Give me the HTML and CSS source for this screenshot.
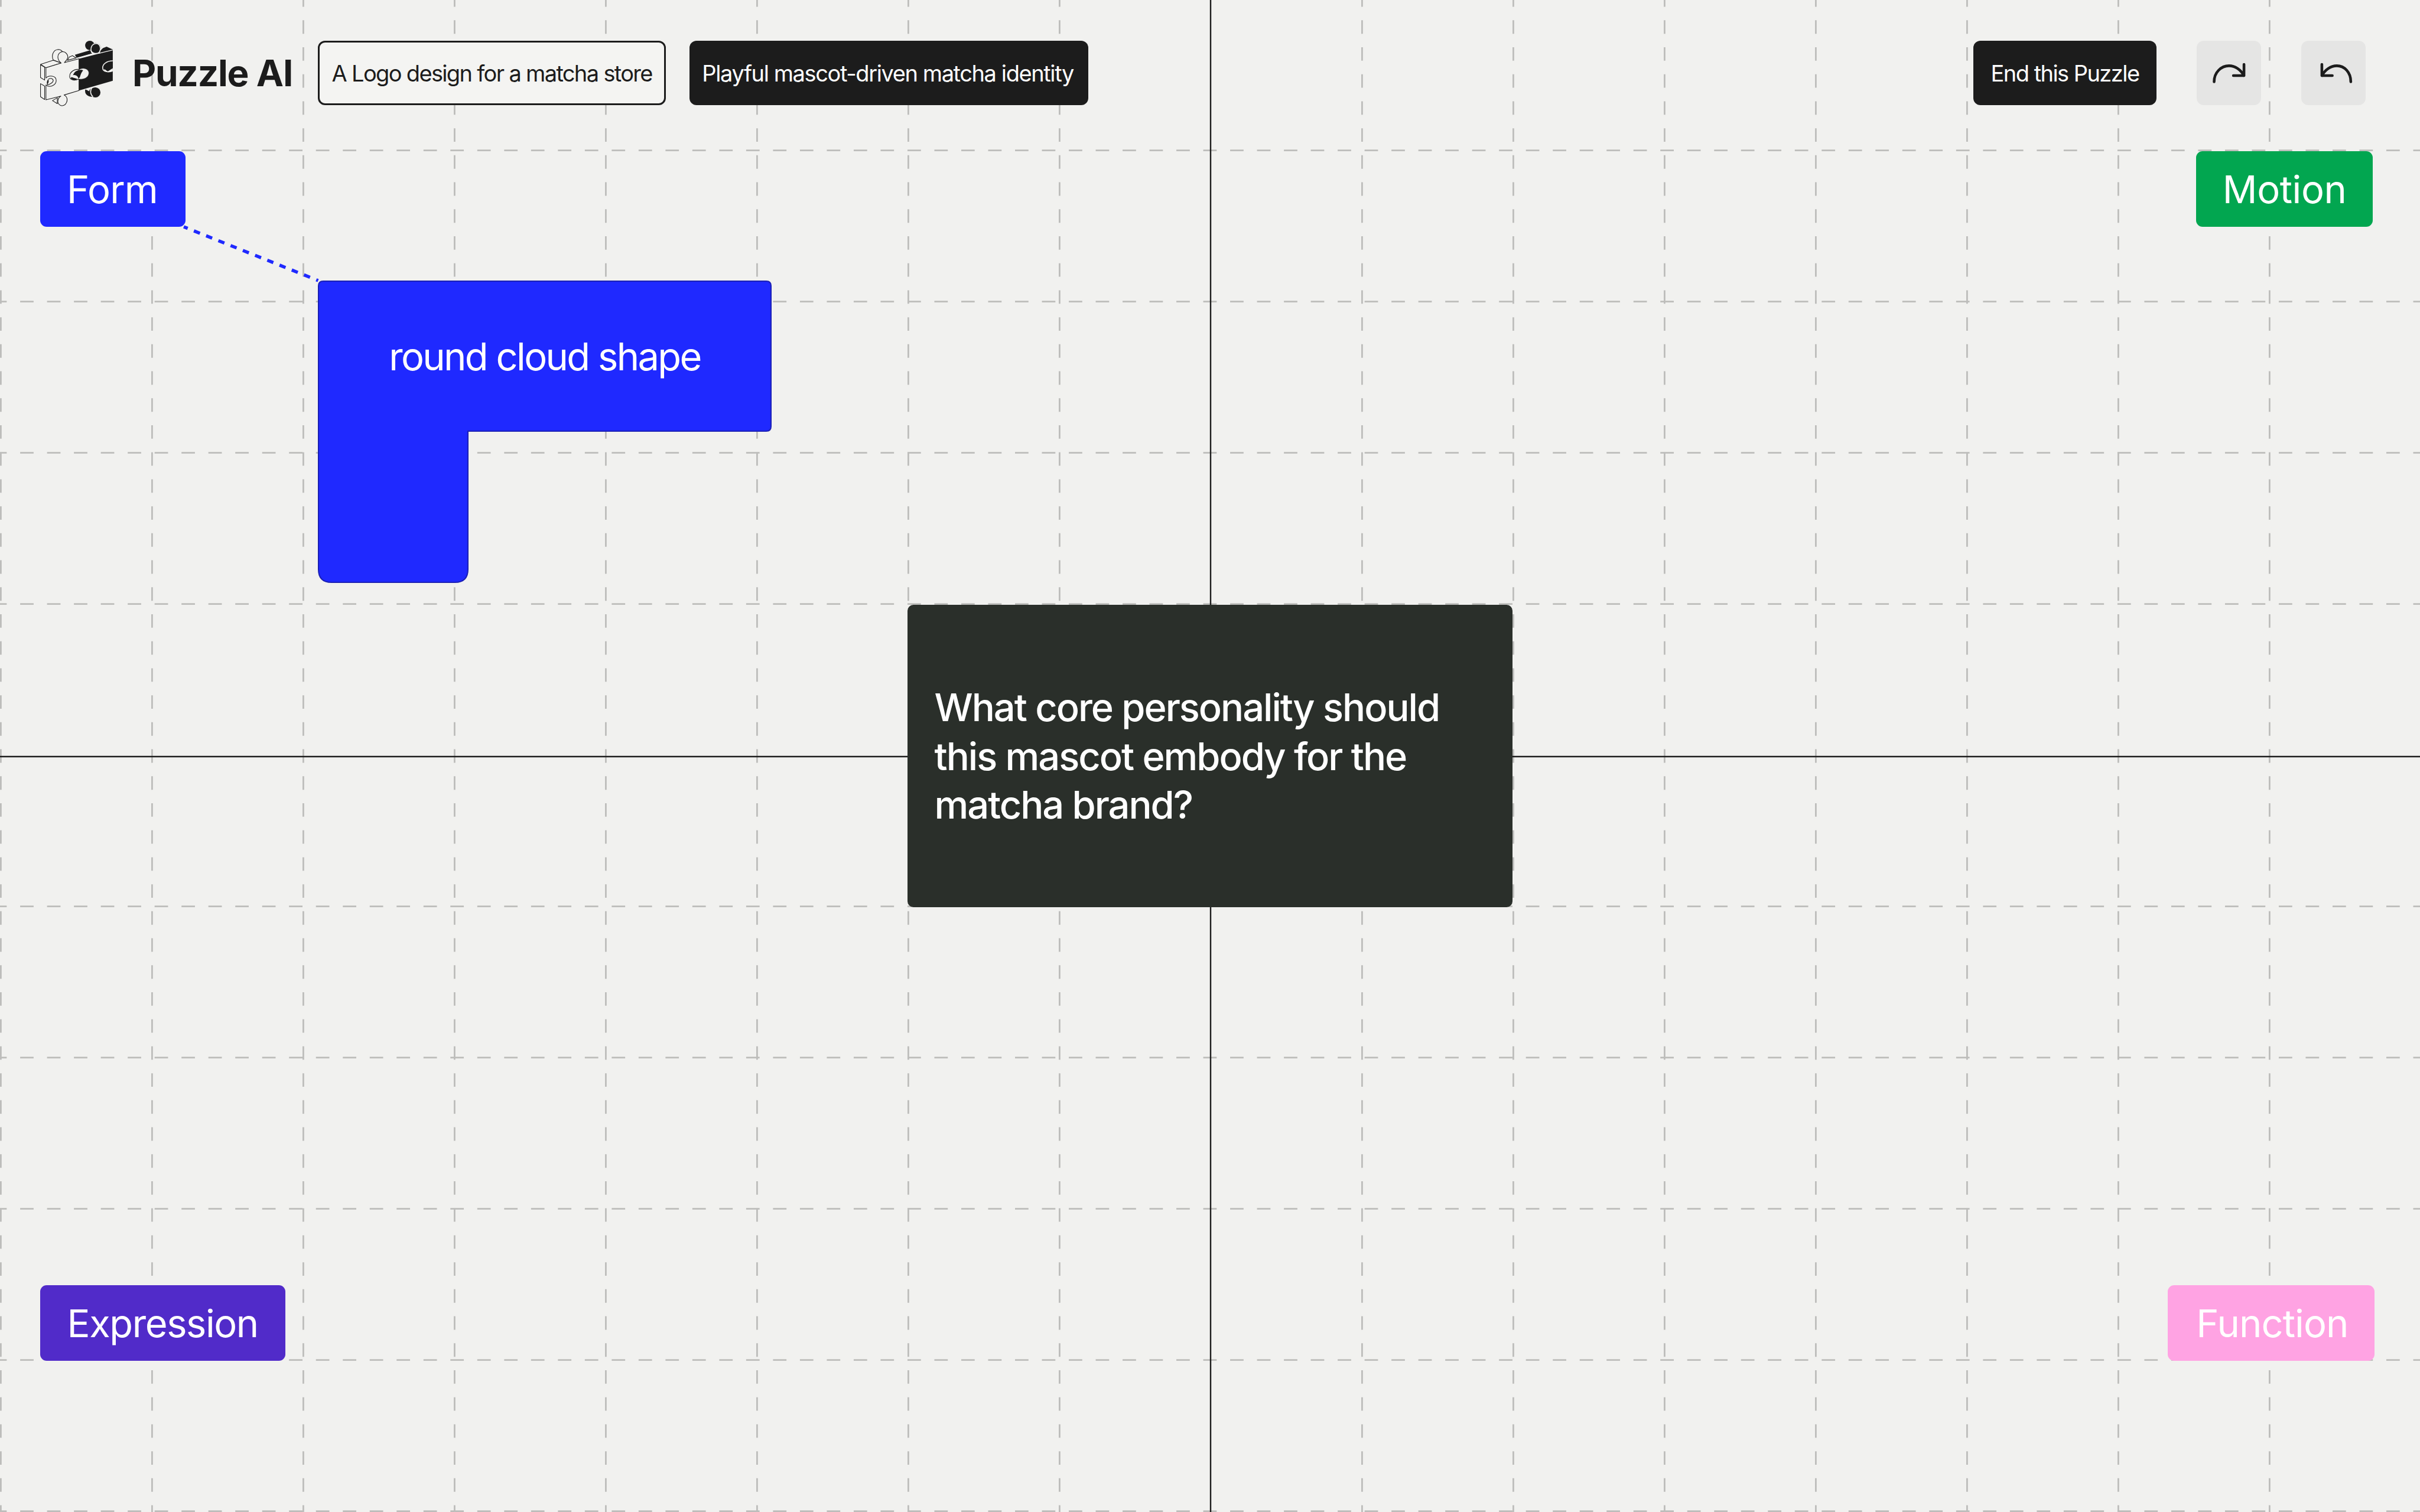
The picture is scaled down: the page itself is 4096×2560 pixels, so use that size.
FILE: index.html
```html
<!DOCTYPE html>
<html lang="en">
<head>
<meta charset="utf-8">
<title>Puzzle AI</title>
<link rel="stylesheet" href="styles.css">
</head>
<body>
<main class="board">
  <svg class="grid" width="4096" height="2560" viewBox="0 0 4096 2560" aria-hidden="true">
    <g class="grid-v">
      <line x1="1.4" y1="0" x2="1.4" y2="2560"/><line x1="257.4" y1="0" x2="257.4" y2="2560"/><line x1="513.4" y1="0" x2="513.4" y2="2560"/><line x1="769.4" y1="0" x2="769.4" y2="2560"/>
      <line x1="1025.4" y1="0" x2="1025.4" y2="2560"/><line x1="1281.4" y1="0" x2="1281.4" y2="2560"/><line x1="1537.4" y1="0" x2="1537.4" y2="2560"/><line x1="1793.4" y1="0" x2="1793.4" y2="2560"/>
      <line x1="2305.4" y1="0" x2="2305.4" y2="2560"/><line x1="2561.4" y1="0" x2="2561.4" y2="2560"/><line x1="2817.4" y1="0" x2="2817.4" y2="2560"/><line x1="3073.4" y1="0" x2="3073.4" y2="2560"/>
      <line x1="3329.4" y1="0" x2="3329.4" y2="2560"/><line x1="3585.4" y1="0" x2="3585.4" y2="2560"/><line x1="3841.4" y1="0" x2="3841.4" y2="2560"/>
    </g>
    <g class="grid-h">
      <line x1="0" y1="254.6" x2="4096" y2="254.6"/><line x1="0" y1="510.6" x2="4096" y2="510.6"/><line x1="0" y1="766.6" x2="4096" y2="766.6"/><line x1="0" y1="1022.6" x2="4096" y2="1022.6"/>
      <line x1="0" y1="1534.6" x2="4096" y2="1534.6"/><line x1="0" y1="1790.6" x2="4096" y2="1790.6"/><line x1="0" y1="2046.6" x2="4096" y2="2046.6"/><line x1="0" y1="2302.6" x2="4096" y2="2302.6"/><line x1="0" y1="2558.6" x2="4096" y2="2558.6"/>
    </g>
    <g class="axes">
      <line x1="2049" y1="0" x2="2049" y2="2560"/>
      <line x1="0" y1="1281" x2="4096" y2="1281"/>
    </g>
    <line class="link" x1="311" y1="384" x2="538.5" y2="475"/>
  </svg>

  <header class="topbar">
    <div class="brand">
      <svg class="logo" viewBox="0 0 444 390" aria-hidden="true">
        <circle class="ink" cx="288" cy="50" r="25"/>
        <path class="ink" d="M208 100 L290 76 L300 94 L218 118 Z"/>
        <path class="ink" d="M345 78 L358 65 L378 57 L411 72 V80 L340 94 Z"/>
        <path class="ink" d="M285 296 C285 285 300 276 320 276 L330 320 C305 332 265 325 263 298 L263 285 Z"/>
        <circle class="ink" cx="318" cy="302" r="27"/>
        <path class="rim" d="M262 285 L300 277 C288 292 290 312 305 325"/>
        <path class="ink" d="M230 122 L411 75 V240 L230 292 Z"/>
        <circle class="ink" cx="320" cy="64" r="27"/>
        <path class="rim" d="M299 90 C288 66 298 42 320 40 C342 38 354 68 335 93"/>
        <path class="rim rim-thin" d="M216 119 L299 96 M335 93 L411 75"/>

        <path class="notch" d="M411 133 C380 133 355 150 357 172 C358 190 385 197 411 187"/>
        <path class="paper-fill" d="M365 176 L384 190 L411 172 V187 C390 197 365 195 365 176 Z"/>

        <path class="line" d="M92 128 C82 105 90 75 118 72 C130 72 140 80 145 88 L135 145 Z"/>
        <path class="line" d="M168 130 L178 112 L195 105 L215 118 Z"/>
        <path class="line" d="M24 152 L92 130 L135 145 L53 170 Z"/>
        <path class="line" d="M24 154 L46 167 V236 L24 222 Z"/>
        <path class="line" d="M24 255 L46 268 V340 L24 325 Z"/>
        <path class="line" d="M88 346 L114 331 V362 Z"/>
        <path class="line" d="M53 170 L135 145 C110 125 112 95 135 85 C160 78 175 105 168 120 C165 130 155 138 152 142 L230 122 V292 L150 316 C170 325 172 350 155 368 C135 382 112 365 118 342 C120 332 128 325 133 322 L53 342 V262 C75 280 108 262 108 238 C108 212 70 208 53 225 Z"/>
        <path class="line-light" d="M58 262 C70 262 90 250 92 240 C92 228 78 222 65 232"/>
        <path class="ink" d="M60 262 C68 250 70 240 65 232 C58 240 56 252 60 262 Z"/>

        <g transform="translate(138 138)">
          <path class="lobe-left" d="M92 42 C70 35 42 55 42 78 C42 95 62 105 92 92 Z"/>
          <path class="lobe-right" d="M92 42 C110 28 145 35 145 60 C145 85 115 98 88 92 Z"/>
          <path class="ink" d="M60 72 C66 55 80 46 92 45 C102 42 110 44 114 46 C104 56 100 72 96 84 L90 88 C84 76 74 68 60 72 Z"/>
          <path class="ink" d="M47 88 C55 100 75 100 84 92 C72 88 60 86 52 82 Z"/>
        </g>
      </svg>
      <span class="wordmark">Puzzle AI</span>
    </div>
    <div class="tag tag-outline">A Logo design for a matcha store</div>
    <div class="tag tag-solid tag-direction">Playful mascot-driven matcha identity</div>
    <button class="tag tag-solid end-btn" type="button">End this Puzzle</button>
    <button class="icon-btn redo" type="button" aria-label="Redo">
      <svg viewBox="0 0 344 345" aria-hidden="true">
        <path d="M93 220 C93 170 130 134 173 134 C 205 134 235 155 253 187 M253 127 V187 H196"/>
      </svg>
    </button>
    <button class="icon-btn undo" type="button" aria-label="Undo">
      <svg viewBox="0 0 344 345" aria-hidden="true">
        <path d="M265 220 C265 170 232 134 190 134 C 158 134 128 155 110 187 M110 127 V187 H166"/>
      </svg>
    </button>
  </header>

  <div class="chip chip-form">Form</div>
  <div class="chip chip-motion">Motion</div>
  <div class="chip chip-expression">Expression</div>
  <div class="chip chip-function">Function</div>

  <div class="piece">
    <svg class="piece-shape" width="768" height="512" viewBox="-1 -1 768 512" aria-hidden="true">
      <path d="M8 0 H758 Q766 0 766 8 V246 Q766 254 758 254 H253 V488 Q253 510 231 510 H22 Q0 510 0 488 V8 Q0 0 8 0 Z"/>
    </svg>
    <div class="piece-label">round cloud shape</div>
  </div>

  <section class="prompt">
    <p>What core personality should this mascot embody for the matcha brand?</p>
  </section>
</main>
</body>
</html>
```

FILE: styles.css
```css
* { box-sizing: border-box; }
html, body { margin: 0; padding: 0; }
body {
  width: 4096px;
  height: 2560px;
  overflow: hidden;
  background: #f1f1ef;
  font-family: Inter, "Liberation Sans", sans-serif;
  color: #1c1c1c;
}
.board { position: relative; width: 4096px; height: 2560px; }

.grid { position: absolute; inset: 0; display: block; }
.grid-v line { stroke: #bdbdbb; stroke-width: 2.8; stroke-dasharray: 22.857 22.857; stroke-dashoffset: 11.43; }
.grid-h line { stroke: #bdbdbb; stroke-width: 2.8; stroke-dasharray: 22.755 22.755; stroke-dashoffset: 11.38; }
.axes line { stroke: #1c1c1c; stroke-width: 2.4; }
.link { stroke: #1f29ff; stroke-width: 5.5; stroke-dasharray: 11 11.3; stroke-dashoffset: 3.8; }

.topbar {
  position: relative;
  display: flex;
  align-items: center;
  height: 109px;
  padding-left: 60.7px;
  padding-right: 92px;
  top: 69px;
}
.brand { display: flex; align-items: center; gap: 23px; width: 477.8px; height: 100%; }
.logo { width: 140.3px; height: 123.3px; flex: none; display: block; margin-bottom: 2.3px; }
.logo .ink { fill: #1c1c1c; }
.logo .rim { fill: none; stroke: #f1f1ef; stroke-width: 5; }
.logo .rim-thin { stroke-width: 4; }
.logo .notch { fill: #1c1c1c; stroke: #f1f1ef; stroke-width: 5; }
.logo .paper-fill { fill: #f1f1ef; }
.logo .line { fill: #f1f1ef; stroke: #1c1c1c; stroke-width: 3.4; stroke-linejoin: round; }
.logo .line-light { fill: none; stroke: #1c1c1c; stroke-width: 3.4; }
.logo .lobe-left { fill: #f1f1ef; stroke: #1c1c1c; stroke-width: 3.4; }
.logo .lobe-right { fill: #f1f1ef; stroke: #1c1c1c; stroke-width: 2; }
.wordmark { font-size: 62px; font-weight: 700; letter-spacing: -1.2px; white-space: nowrap; }

.tag {
  display: flex;
  align-items: center;
  justify-content: center;
  height: 109px;
  padding: 0 23px;
  border-radius: 12px;
  font-family: inherit;
  font-size: 38px;
  font-weight: 400;
  letter-spacing: -1.66px;
  white-space: nowrap;
}
.tag-outline { background: #f4f4f2; border: 3px solid #1c1c1c; padding: 0 20px; }
.tag-solid { background: #1c1c1c; color: #fff; border: 0; margin-left: 40.5px; }
.tag-direction { padding: 0 25px 0 21px; letter-spacing: -1.4px; }
.end-btn { margin-left: auto; padding: 0 29.5px; letter-spacing: -1.55px; }

.icon-btn {
  width: 109px;
  height: 109px;
  padding: 0;
  border: 0;
  border-radius: 12px;
  background: #e5e5e4;
  flex: none;
  margin-left: 68px;
}
.icon-btn svg { width: 100%; height: 100%; display: block; }
.icon-btn path { fill: none; stroke: #1c1c1c; stroke-width: 14.5; stroke-linecap: round; stroke-linejoin: round; }

.chip {
  position: absolute;
  display: flex;
  align-items: center;
  height: 128px;
  border-radius: 11px;
  color: #fff;
  font-size: 65px;
  white-space: nowrap;
}
.chip-form { left: 68px; top: 256px; padding: 0 46.5px 0 45px; background: #1f29ff; letter-spacing: -0.8px; }
.chip-motion { right: 80px; top: 256px; padding: 0 44.5px 0 45px; background: #02a650; letter-spacing: -0.4px; }
.chip-expression { left: 68px; top: 2176px; padding: 0 46.5px 0 45.5px; background: #512bc9; letter-spacing: -1.4px; }
.chip-function { right: 77px; top: 2176px; padding: 0 44.5px 0 48px; background: #ffa3e3; letter-spacing: -0.9px; }

.piece { position: absolute; left: 539px; top: 476px; width: 766px; height: 510px; }
.piece-shape { position: absolute; left: -1px; top: -1px; display: block; }
.piece-shape path { fill: #1f29ff; stroke: #1a1fb5; stroke-width: 2; }
.piece-label {
  position: relative;
  display: flex;
  align-items: center;
  justify-content: center;
  height: 254px;
  color: #fff;
  font-size: 65px;
  letter-spacing: -2.65px;
  white-space: nowrap;
}

.prompt {
  position: absolute;
  left: 1536px;
  top: 1024px;
  width: 1024px;
  height: 512px;
  display: flex;
  align-items: center;
  padding: 2px 46px 0 45.5px;
  border-radius: 10px;
  background: #2a2f2a;
  color: #fff;
}
.prompt p { margin: 0; font-size: 65px; font-weight: 500; line-height: 82.5px; letter-spacing: -2px; }
```
